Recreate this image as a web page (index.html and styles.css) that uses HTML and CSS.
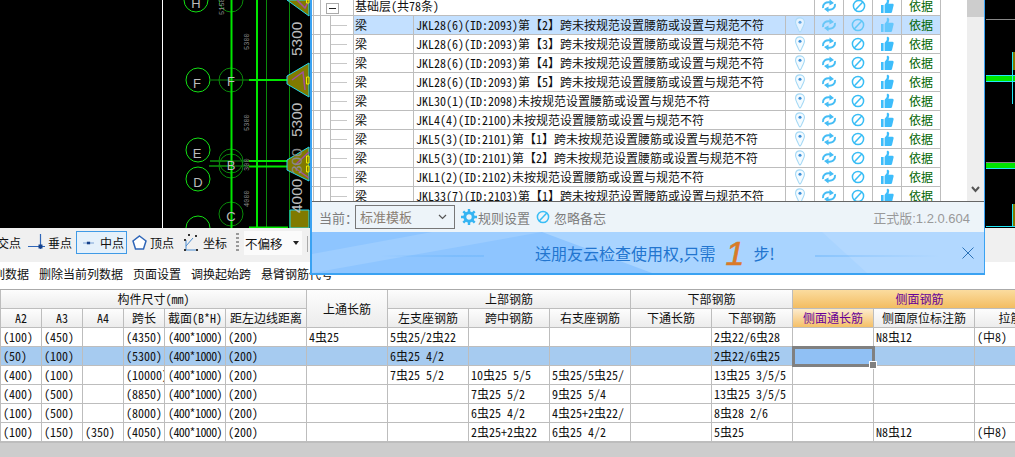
FILE: index.html
```
<!DOCTYPE html>
<html lang="zh-CN">
<head>
<meta charset="utf-8">
<title>云检查</title>
<link rel="stylesheet" href="styles.css">
</head>
<body>
<svg class="defs" aria-hidden="true">
  <symbol id="i-pin" viewBox="0 0 14 18"><path d="M7 1C3.600 1 2 3.400 2 6c0 2.600 1.600 4.600 2.600 7 .6 1.500 1 3 2.400 4 1.400-1 1.800-2.500 2.400-4C10.400 10.600 12 8.600 12 6c0-2.600-1.600-5-5-5z" fill="#f4fbff" stroke="#a3d8f5" stroke-width="1.200"/><circle cx="7" cy="6" r="1.700" fill="#3d8fd8"/></symbol>
  <symbol id="i-sync" viewBox="0 0 16 16"><g fill="none" stroke="#45bdf5" stroke-width="2"><path d="M2 10C1.500 6.500 4.500 3.500 9.500 4.500"/><path d="M14 6c.5 3.500-2.500 6.500-7.500 5.500"/></g><path d="M8.500 1.500 13 5 8.500 7.500zM7.500 8.500 3 11l4.500 3.500z" fill="#45bdf5"/></symbol>
  <symbol id="i-ban" viewBox="0 0 14 14"><circle cx="7" cy="7" r="5.600" fill="none" stroke="#38bdf5" stroke-width="1.500"/><path d="M3.200 11 10.800 3" stroke="#38bdf5" stroke-width="1.500"/></symbol>
  <symbol id="i-thumb" viewBox="0 0 14 16"><path d="M1 7h2.600v8H1zM4.600 7 6.800 4V1.300c0-1 2.300-.8 2.400 1.300 0 1-.3 2-.7 3.200h3.900c1.200 0 1.500 1 1.100 2L12 14c-.3.700-.7 1-1.500 1H4.600z" fill="#3dbdfb"/></symbol>
</svg>
<div class="app">
  <div class="cad">
    <svg class="cad-art" width="1015" height="228" viewBox="0 0 1015 228">
      <line x1="162.500" y1="0" x2="162.500" y2="228" stroke="#fff"/>
      <g fill="none" stroke="#13e013">
        <circle cx="196" cy="0" r="12"/><circle cx="198" cy="80" r="12"/><circle cx="198" cy="150" r="12"/><circle cx="198" cy="179" r="12"/><circle cx="198" cy="228" r="12"/>
        <path d="M210 161H231M209 166H231"/>
      </g>
      <g fill="none" stroke="#0a8a0a">
        <circle cx="231" cy="0" r="12"/><circle cx="231" cy="80" r="12"/><circle cx="231" cy="161" r="12"/><circle cx="231" cy="166" r="12"/><circle cx="231" cy="214" r="12"/>
        <path d="M266.500 0V228M289.500 0V228M211 80H249M231 161H249M231 166H249"/>
      </g>
      <g stroke="#00e600" stroke-width="2">
        <path d="M231.500 0V228M257 0V228M249 80H288M249 161H288M249 166.500H288M249 227.500H288"/>
      </g>
      <g class="cad-letter"><text x="196" y="8">H</text><text x="197" y="88">F</text><text x="197" y="158">E</text><text x="198" y="187">D</text><text x="231" y="86">F</text><text x="231" y="170">B</text><text x="231" y="221">C</text></g>
      <g class="cad-mini">
        <text transform="translate(224 15) rotate(-90)">5150</text>
        <text transform="translate(249 50) rotate(-90)">5300</text>
        <text transform="translate(249 131) rotate(-90)">5300</text>
        <text transform="translate(249 171) rotate(-90)">300</text>
        <text transform="translate(249 207) rotate(-90)">4000</text>
      </g>
      <g fill="#807a00" stroke="#20d8f0">
        <path d="M287 0 309 16V0z"/><path d="M309 63 287 76V84L309 97z"/><path d="M309 147 287 160V170L309 181z"/><path d="M290 210H309V228H290z"/>
      </g>
      <g fill="none" stroke="#a050a0" stroke-width="1.500"><path d="M297 0 305 8 309 0M292 80 303 72 305 90M295 165 309 152M295 168 309 178"/></g>
      <g fill="#807a00" stroke="#f0f000"><path d="M306.500 0H309V3H306.500zM306.500 77H309V84H306.500zM306.500 156H309V163H306.500zM306.500 166H309V172H306.500z"/></g>
      <g class="cad-big">
        <text transform="translate(302 56) rotate(-90)">5300</text>
        <text transform="translate(302 137) rotate(-90)">5300</text>
        <text class="cad-faint" transform="translate(302 174) rotate(-90)">300</text>
        <text transform="translate(302 213) rotate(-90)">4000</text>
      </g>
      <path d="M986 19.500H1015M986 162.500H1015" stroke="#888"/>
      <path d="M986 78.500H1015M986 165.500H1015" stroke="#00e600" stroke-width="5"/>
      <path d="M986 75.500H1015M986 81.500H1015M986 168.500H1015M986 226.500H1015M1012.500 52V104M1012.500 204V226" stroke="#20e8f8"/>
      <path d="M1013 52H1015V70H1013zM1013 204H1015V226H1013z" fill="#807a00"/>
    </svg>
  </div>

  <div class="snapbar">
    <span class="snap snap-cut">交点</span>
    <span class="snap"><svg width="17" height="18" viewBox="0 0 17 18"><path d="M0 12.500H17M12.500 0V15" stroke="#2f66b8" stroke-width="1.200"/><rect x="10.500" y="10.500" width="4" height="4" fill="#15408a"/></svg>垂点</span>
    <span class="snap snap-on"><svg width="17" height="10" viewBox="0 0 17 10"><path d="M0 5H17" stroke="#5a8ccc" stroke-width="1.200"/><rect x="6" y="3" width="5" height="4" fill="#15408a"/></svg>中点</span>
    <span class="snap"><svg width="15" height="15" viewBox="0 0 15 15"><path d="M7.500 1 14 6 11.500 14H3.500L1 6z" fill="#fff" stroke="#2f66b8" stroke-width="1.500"/></svg>顶点</span>
    <span class="snap snap-coord"><svg width="16" height="18" viewBox="0 0 16 18"><path d="M3 16V6M3 16H14M3 12 10 4" stroke="#4a8cd0" fill="none"/><g fill="#333"><rect x="1" y="5" width="2" height="2"/><rect x="5" y="0" width="2" height="2"/><rect x="12" y="1" width="2" height="2"/><rect x="1" y="15" width="2" height="2"/><rect x="13" y="15" width="2" height="2"/></g></svg>坐标</span>
    <span class="grip"></span>
    <span class="offset">不偏移<i class="caret"></i></span>
    <span class="sep"></span>
  </div>

  <div class="actionbar">
    <span class="act act-cut">列数据</span>
    <span class="act">删除当前列数据</span>
    <span class="act">页面设置</span>
    <span class="act">调换起始跨</span>
    <span class="act">悬臂钢筋代号</span>
  </div>

  <div class="gridwrap">
    <table class="grid">
      <colgroup>
        <col class="c42"><col class="c41"><col class="c41"><col class="c41"><col class="c61">
        <col class="c81"><col class="c81"><col class="c81"><col class="c81"><col class="c81"><col class="c81"><col class="c81"><col class="c81">
        <col class="c101"><col class="c72">
      </colgroup>
      <thead>
        <tr>
          <th colspan="6">构件尺寸(mm)</th>
          <th rowspan="2">上通长筋</th>
          <th colspan="3">上部钢筋</th>
          <th colspan="2">下部钢筋</th>
          <th colspan="3" class="hot-top">侧面钢筋</th>
        </tr>
        <tr>
          <th>A2</th><th>A3</th><th>A4</th><th>跨长</th><th>截面(B*H)</th><th>距左边线距离</th>
          <th>左支座钢筋</th><th>跨中钢筋</th><th>右支座钢筋</th>
          <th>下通长筋</th><th>下部钢筋</th>
          <th class="hot-sub">侧面通长筋</th><th>侧面原位标注筋</th><th>拉筋</th>
        </tr>
      </thead>
      <tbody>
        <tr><td>(100)</td><td>(450)</td><td></td><td>(4350)</td><td>(400*1000)</td><td>(200)</td><td>4虫25</td><td>5虫25/2虫22</td><td></td><td></td><td></td><td>2虫22/6虫28</td><td></td><td>N8虫12</td><td>(中8)</td></tr>
        <tr class="sel"><td>(50)</td><td>(100)</td><td></td><td>(5300)</td><td>(400*1000)</td><td>(200)</td><td></td><td>6虫25 4/2</td><td></td><td></td><td></td><td>2虫22/6虫25</td><td class="cur"></td><td></td><td></td></tr>
        <tr><td>(400)</td><td>(100)</td><td></td><td>(10000)</td><td>(400*1000)</td><td>(200)</td><td></td><td>7虫25 5/2</td><td>10虫25 5/5</td><td>5虫25/5虫25/</td><td></td><td>13虫25 3/5/5</td><td></td><td></td><td></td></tr>
        <tr><td>(400)</td><td>(500)</td><td></td><td>(8850)</td><td>(400*1000)</td><td>(200)</td><td></td><td></td><td>7虫25 5/2</td><td>9虫25 5/4</td><td></td><td>13虫25 3/5/5</td><td></td><td></td><td></td></tr>
        <tr><td>(100)</td><td>(500)</td><td></td><td>(8000)</td><td>(400*1000)</td><td>(200)</td><td></td><td></td><td>6虫25 4/2</td><td>4虫25+2虫22/</td><td></td><td>8虫28 2/6</td><td></td><td></td><td></td></tr>
        <tr><td>(100)</td><td>(150)</td><td>(350)</td><td>(4050)</td><td>(400*1000)</td><td>(200)</td><td></td><td></td><td>2虫25+2虫22</td><td>6虫25 4/2</td><td></td><td>5虫25</td><td></td><td>N8虫12</td><td>(中8)</td></tr>
      </tbody>
    </table>
  </div>
  <div class="filler"></div>

  <div class="dialog">
    <div class="listrow">
      <div class="listclip">
        <table class="list">
          <colgroup><col class="t2"><col class="t7"><col class="t10"><col class="t23"><col class="t60"><col class="t372"><col class="t29"><col class="t29"><col class="t29"><col class="t29"><col class="t39"></colgroup>
          <tbody>
            <tr class="group"><td></td><td></td><td colspan="2"><span class="minus"></span></td><td colspan="3">基础层(共78条)</td><td class="ic"><svg class="s16"><use href="#i-sync"/></svg></td><td class="ic"><svg class="s14"><use href="#i-ban"/></svg></td><td class="ic"><svg class="s15"><use href="#i-thumb"/></svg></td><td class="basis">依据</td></tr>
            <tr class="on"><td></td><td></td><td></td><td class="leaf"></td><td>梁</td><td>JKL28(6)(ID:2093)第【2】跨未按规范设置腰筋或设置与规范不符</td><td class="ic"><svg class="s16"><use href="#i-pin"/></svg></td><td class="ic"><svg class="s16"><use href="#i-sync"/></svg></td><td class="ic"><svg class="s14"><use href="#i-ban"/></svg></td><td class="ic"><svg class="s15"><use href="#i-thumb"/></svg></td><td class="basis">依据</td></tr>
            <tr><td></td><td></td><td></td><td class="leaf"></td><td>梁</td><td>JKL28(6)(ID:2093)第【3】跨未按规范设置腰筋或设置与规范不符</td><td class="ic"><svg class="s16"><use href="#i-pin"/></svg></td><td class="ic"><svg class="s16"><use href="#i-sync"/></svg></td><td class="ic"><svg class="s14"><use href="#i-ban"/></svg></td><td class="ic"><svg class="s15"><use href="#i-thumb"/></svg></td><td class="basis">依据</td></tr>
            <tr><td></td><td></td><td></td><td class="leaf"></td><td>梁</td><td>JKL28(6)(ID:2093)第【4】跨未按规范设置腰筋或设置与规范不符</td><td class="ic"><svg class="s16"><use href="#i-pin"/></svg></td><td class="ic"><svg class="s16"><use href="#i-sync"/></svg></td><td class="ic"><svg class="s14"><use href="#i-ban"/></svg></td><td class="ic"><svg class="s15"><use href="#i-thumb"/></svg></td><td class="basis">依据</td></tr>
            <tr><td></td><td></td><td></td><td class="leaf"></td><td>梁</td><td>JKL28(6)(ID:2093)第【5】跨未按规范设置腰筋或设置与规范不符</td><td class="ic"><svg class="s16"><use href="#i-pin"/></svg></td><td class="ic"><svg class="s16"><use href="#i-sync"/></svg></td><td class="ic"><svg class="s14"><use href="#i-ban"/></svg></td><td class="ic"><svg class="s15"><use href="#i-thumb"/></svg></td><td class="basis">依据</td></tr>
            <tr><td></td><td></td><td></td><td class="leaf"></td><td>梁</td><td>JKL30(1)(ID:2098)未按规范设置腰筋或设置与规范不符</td><td class="ic"><svg class="s16"><use href="#i-pin"/></svg></td><td class="ic"><svg class="s16"><use href="#i-sync"/></svg></td><td class="ic"><svg class="s14"><use href="#i-ban"/></svg></td><td class="ic"><svg class="s15"><use href="#i-thumb"/></svg></td><td class="basis">依据</td></tr>
            <tr><td></td><td></td><td></td><td class="leaf"></td><td>梁</td><td>JKL4(4)(ID:2100)未按规范设置腰筋或设置与规范不符</td><td class="ic"><svg class="s16"><use href="#i-pin"/></svg></td><td class="ic"><svg class="s16"><use href="#i-sync"/></svg></td><td class="ic"><svg class="s14"><use href="#i-ban"/></svg></td><td class="ic"><svg class="s15"><use href="#i-thumb"/></svg></td><td class="basis">依据</td></tr>
            <tr><td></td><td></td><td></td><td class="leaf"></td><td>梁</td><td>JKL5(3)(ID:2101)第【1】跨未按规范设置腰筋或设置与规范不符</td><td class="ic"><svg class="s16"><use href="#i-pin"/></svg></td><td class="ic"><svg class="s16"><use href="#i-sync"/></svg></td><td class="ic"><svg class="s14"><use href="#i-ban"/></svg></td><td class="ic"><svg class="s15"><use href="#i-thumb"/></svg></td><td class="basis">依据</td></tr>
            <tr><td></td><td></td><td></td><td class="leaf"></td><td>梁</td><td>JKL5(3)(ID:2101)第【2】跨未按规范设置腰筋或设置与规范不符</td><td class="ic"><svg class="s16"><use href="#i-pin"/></svg></td><td class="ic"><svg class="s16"><use href="#i-sync"/></svg></td><td class="ic"><svg class="s14"><use href="#i-ban"/></svg></td><td class="ic"><svg class="s15"><use href="#i-thumb"/></svg></td><td class="basis">依据</td></tr>
            <tr><td></td><td></td><td></td><td class="leaf"></td><td>梁</td><td>JKL1(2)(ID:2102)未按规范设置腰筋或设置与规范不符</td><td class="ic"><svg class="s16"><use href="#i-pin"/></svg></td><td class="ic"><svg class="s16"><use href="#i-sync"/></svg></td><td class="ic"><svg class="s14"><use href="#i-ban"/></svg></td><td class="ic"><svg class="s15"><use href="#i-thumb"/></svg></td><td class="basis">依据</td></tr>
            <tr><td></td><td></td><td></td><td class="leaf"></td><td>梁</td><td>JKL33(7)(ID:2103)第【1】跨未按规范设置腰筋或设置与规范不符</td><td class="ic"><svg class="s16"><use href="#i-pin"/></svg></td><td class="ic"><svg class="s16"><use href="#i-sync"/></svg></td><td class="ic"><svg class="s14"><use href="#i-ban"/></svg></td><td class="ic"><svg class="s15"><use href="#i-thumb"/></svg></td><td class="basis">依据</td></tr>
          </tbody>
        </table>
      </div>
      <div class="scroll">
        <span class="thumb"></span>
        <svg class="scroll-down" width="9" height="7" viewBox="0 0 9 7"><path d="M1 1 4.500 5 8 1" fill="none" stroke="#555" stroke-width="2"/></svg>
      </div>
    </div>
    <div class="toolrow">
      <span class="cur-label">当前：</span>
      <span class="tpl">标准模板<svg width="9" height="6" viewBox="0 0 9 6"><path d="M1 1 4.500 4.500 8 1" fill="none" stroke="#555" stroke-width="1.200"/></svg></span>
      <span class="tool"><svg width="16" height="16" viewBox="0 0 16 16"><circle cx="8" cy="8" r="4.200" fill="none" stroke="#35b4f2" stroke-width="3"/><path d="M8 0V3M8 13V16M0 8H3M13 8H16M2.300 2.300 4.400 4.400M11.600 11.600 13.700 13.700M2.300 13.700 4.400 11.600M11.600 4.400 13.700 2.300" stroke="#35b4f2" stroke-width="2.400"/></svg>规则设置</span>
      <span class="tool tool-ban"><svg class="s13"><use href="#i-ban"/></svg>忽略备忘</span>
      <span class="version">正式版:1.2.0.604</span>
    </div>
    <div class="banner">
      <svg class="banner-art" width="672" height="41" viewBox="0 0 672 41">
        <defs>
          <linearGradient id="fade-a" x1="0" x2="1" y1="0" y2="0"><stop offset="0" stop-color="#6db6fb" stop-opacity="0"/><stop offset=".7" stop-color="#6db6fb"/></linearGradient>
          <linearGradient id="fade-b" x1="0" x2="1" y1="0" y2="0"><stop offset="0" stop-color="#6db6fb"/><stop offset="1" stop-color="#6db6fb" stop-opacity="0"/></linearGradient>
        </defs>
        <path d="M0 0H230L340 41H0z" fill="#8ec5ff"/>
        <path d="M0 41 230 0H120L0 22z" fill="#9dcdff"/>
        <path d="M510 0H672V41H555z" fill="#b2d8ff"/>
        <rect x="68" y="23.500" width="104" height="1" fill="url(#fade-a)"/>
        <rect x="503" y="23.500" width="125" height="1" fill="url(#fade-b)"/>
      </svg>
      <span class="promo">送朋友云检查使用权,只需</span>
      <span class="promo-num">1</span>
      <span class="promo">步!</span>
      <svg class="banner-x" width="12" height="12" viewBox="0 0 12 12"><path d="M.5.500 11.500 11.500M11.500.500.500 11.500" stroke="#2b72b8"/></svg>
    </div>
  </div>
</div>
</body>
</html>
```
FILE: styles.css
```
* { box-sizing: border-box; }
html, body { margin: 0; padding: 0; height: 100%; overflow: hidden; background: #fff; }
body { font-family: "Noto Sans Mono CJK SC", "Noto Sans CJK SC", "Liberation Mono", monospace; font-size: 12px; color: #111; }
.defs { display: none; }
.app { position: relative; width: 1015px; height: 457px; display: flex; flex-direction: column; overflow: hidden; }

/* CAD canvas */
.cad { height: 228px; flex: none; background: #000; position: relative; overflow: hidden; }
.cad-art { display: block; }
.cad-letter text { fill: #bcbcbc; font: 13px "Liberation Sans", sans-serif; text-anchor: middle; }
.cad-mini text { fill: #8c8c8c; font: 7px "Liberation Mono", monospace; }
.cad-big text { fill: #bdbdbd; font: 15.500px "Liberation Sans", sans-serif; }
.cad-big .cad-faint { fill: #8a8a8a; }

/* snap toolbar */
.snapbar { height: 34px; flex: none; background: #f0f0f0; display: flex; align-items: flex-start; padding-top: 3px; font-family: "Noto Sans CJK SC", sans-serif; }
.snap { display: flex; align-items: center; gap: 3px; height: 23px; margin-left: 7px; white-space: nowrap; }
.snap-cut { margin-left: -3px; }
.snap-on { width: 51px; margin-left: 4px; padding: 0 2px 0 6px; gap: 6px; background: #e5f1fb; border: 1px solid #3f9ae6; }
.snap-on + .snap { margin-left: 5px; }
.snap-coord { margin-left: 9px; gap: 4px; }
.grip { width: 3px; height: 20px; margin: 2px 3px 0 9px; background: repeating-linear-gradient(#999 0 2px, transparent 2px 4px); }
.offset { width: 58px; height: 24px; margin-left: 2px; padding-left: 1px; background: #fbfbfb; display: flex; align-items: center; font-size: 12.500px; }
.caret { width: 0; height: 0; margin-left: 10px; border: 3px solid transparent; border-top: 4px solid #222; border-bottom: 0; }
.sep { width: 1px; height: 16px; margin: 5px 0 0 5px; background: #aaa; }

/* action bar */
.actionbar { height: 28px; flex: none; background: #fff; display: flex; align-items: flex-start; gap: 10px; padding-top: 3px; font-family: "Noto Sans CJK SC", sans-serif; white-space: nowrap; border-bottom: 1px solid #aaa; }
.act-cut { margin-left: -7px; }

/* main grid */
.gridwrap { flex: none; overflow: hidden; }
.grid { table-layout: fixed; width: 1047px; border-collapse: separate; border-spacing: 0; }
.c42 { width: 42px; } .c41 { width: 41px; } .c61 { width: 61px; } .c81 { width: 81px; } .c101 { width: 101px; } .c72 { width: 72px; }
.grid th, .grid td { height: 19px; padding: 0; line-height: 18px; font-weight: 400; border-right: 1px solid #bdbdbd; border-bottom: 1px solid #bdbdbd; overflow: hidden; white-space: nowrap; }
.grid tr > :first-child { border-left: 1px solid #bdbdbd; }
.grid th[rowspan] { border-left: 0; }
.grid thead tr + tr th:first-child { border-left: 1px solid #bdbdbd; }
.grid th { background: linear-gradient(#fdfdfd, #ececec); text-align: center; }
.grid td { padding-left: 2px; background: #fff; }
.grid tbody td:nth-child(5) { padding-left: 3px; letter-spacing: -.6px; }
.grid .hot-top { background: linear-gradient(#fbdc9f, #f3bd62); color: #660099; }
.grid .hot-sub { background: linear-gradient(#fcebcd, #f5c068); color: #660099; }
.grid .sel td { background: #a6cbf0; }
.grid .sel td.cur { background: #90c0f4; outline: 3px solid #808080; outline-offset: -2px; overflow: visible; position: relative; }
.grid .sel td.cur::after { content: ""; position: absolute; right: -4px; bottom: -4px; width: 6px; height: 6px; background: #808080; border: 1px solid #fff; }
.filler { flex: 1; background: #cdcdcd; border-top: 1px solid #bdbdbd; }

/* dialog */
.dialog { position: absolute; left: 310px; top: 0; width: 675px; height: 275px; display: flex; flex-direction: column; background: #fff; border-left: 2px solid #3aa2f2; border-right: 1px solid #3aa2f2; border-bottom: 2px solid #3aa2f2; }
.listrow { height: 202px; flex: none; display: flex; border-bottom: 1px solid #666; }
.listclip { width: 656px; height: 201px; overflow: hidden; }
.list { table-layout: fixed; width: 629px; border-collapse: separate; border-spacing: 0; margin-top: -3px; }
.t2 { width: 2px; } .t7 { width: 7px; } .t10 { width: 10px; } .t23 { width: 23px; } .t60 { width: 60px; } .t372 { width: 372px; } .t29 { width: 29px; } .t39 { width: 39px; }
.list td { height: 19px; padding: 0 0 0 1px; line-height: 18px; border-right: 1px solid #bdbdbd; border-bottom: 1px solid #bdbdbd; white-space: nowrap; overflow: hidden; }
.list td:nth-child(6) { padding-left: 2px; }
.list .leaf { background: linear-gradient(#c8c8c8, #c8c8c8) no-repeat 0 9px / 16px 1px; }
.list .on td:nth-child(n+5) { background: #c3e0ff; }
.list .on .ic svg { opacity: .7; }
.list .ic { padding: 0; text-align: center; vertical-align: middle; }
.list .ic svg { display: block; margin: 0 auto; }
.s16 { width: 16px; height: 16px; }
.s15 { width: 14px; height: 16px; }
.s14 { width: 14px; height: 14px; }
.s13 { width: 14px; height: 14px; }
.list .basis { padding: 0; text-align: center; color: #006400; font-family: "Noto Sans CJK SC", sans-serif; }
.minus { display: block; width: 13px; height: 11px; margin: 5px 0 0 4px; border: 1px solid #aaa; background: linear-gradient(#222, #222) no-repeat center / 7px 1px #fff; }
.scroll { width: 17px; margin-left: auto; background: #eee; display: flex; flex-direction: column; align-items: center; justify-content: space-between; padding-bottom: 8px; }
.thumb { width: 100%; height: 17px; background: #cdcdcd; }

.toolrow { height: 30px; flex: none; background: #edf4f9; display: flex; align-items: center; font-family: "Noto Sans CJK SC", sans-serif; font-size: 13px; color: #7d7d7d; }
.cur-label { width: 43px; padding-left: 7px; white-space: nowrap; }
.tpl { width: 100px; height: 24px; display: flex; align-items: center; justify-content: space-between; padding: 0 7px 0 4px; margin-top: -1px; border: 1px solid #777; font-size: 13px; color: #8b7f74; }
.tool { display: flex; align-items: center; gap: 1px; margin-left: 6px; }
.tool-ban { gap: 4px; }
.version { margin-left: auto; margin-right: 14px; font-family: "Liberation Sans", "Noto Sans CJK SC", sans-serif; color: #999; }

.banner { height: 41px; flex: 1; position: relative; background: #a9d4ff; display: flex; align-items: center; padding-left: 223px; color: #2275cf; font-family: "Noto Sans CJK SC", sans-serif; font-size: 16px; }
.banner-art { position: absolute; left: 0; top: 0; }
.promo { position: relative; white-space: nowrap; }
.promo-num { position: relative; margin: 0 9px 0 10px; font: italic 400 34px "Liberation Sans", sans-serif; -webkit-text-stroke: .6px #d97a28; color: #d97a28; line-height: 30px; }
.banner-x { position: absolute; right: 10px; top: 15px; }
```
